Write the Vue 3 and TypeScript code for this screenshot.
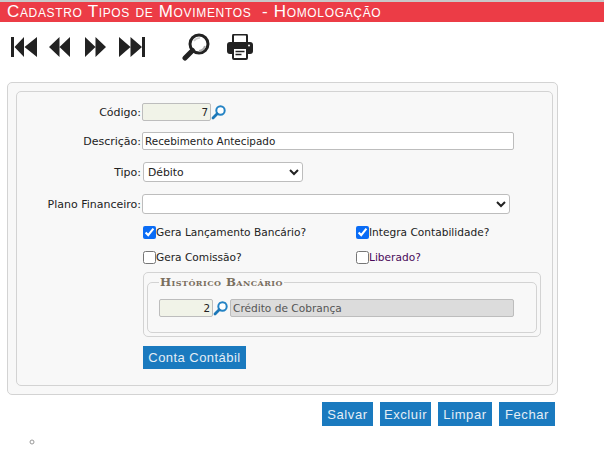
<script setup lang="ts">
const actions: string[] = ['Salvar', 'Excluir', 'Limpar', 'Fechar']
</script>

<template>
  <div class="page">
    <header class="title">Cadastro Tipos de Movimentos &nbsp;- Homologação</header>
    <nav class="toolbar">
      <svg class="nav" width="26" height="20" viewBox="0 0 26 20"><path d="M0 0h3v20H0zM13 0v20L3.500 10zM26 0v20L13.500 10z" fill="#222"/></svg>
      <svg class="nav second" width="21" height="20" viewBox="0 0 21 20"><path d="M10.500 0v20L0 10zM21 0v20L10.500 10z" fill="#222"/></svg>
      <svg class="nav third" width="21" height="20" viewBox="0 0 21 20"><path d="M0 0v20l10.500-10zM10.500 0v20L21 10z" fill="#222"/></svg>
      <svg class="nav fourth" width="26" height="20" viewBox="0 0 26 20"><path d="M0 0v20l11.500-10zM11.500 0v20L23 10zM23 0h3v20h-3z" fill="#222"/></svg>
      <svg class="magnifier" width="28" height="28" viewBox="0 0 28 28">
        <circle cx="17" cy="11" r="9" fill="#fff" stroke="#222" stroke-width="3"/>
        <path d="M12 8a7 7 0 0 1 6-3" stroke="#ccc" stroke-width="1.500" fill="none"/>
        <path d="M17 18a7 7 0 0 0 6-5" stroke="#aaa" stroke-width="2" fill="none"/>
        <path d="M10.500 17.500L3 25" stroke="#222" stroke-width="5" stroke-linecap="round"/>
      </svg>
      <svg class="printer" width="26" height="26" viewBox="0 0 26 26">
        <path d="M6 8V2a1.500 1.500 0 0 1 1.500-1.500h11A1.500 1.500 0 0 1 20 2v6" fill="#fff" stroke="#222" stroke-width="2"/>
        <rect y="8" width="26" height="12" rx="3" fill="#222"/>
        <circle cx="22" cy="11.500" r="1" fill="#fff"/>
        <rect x="6" y="14" width="14" height="11" rx="1" fill="#fff" stroke="#222" stroke-width="2"/>
        <path d="M8.500 17.500h9M8.500 20.500h6" stroke="#222" stroke-width="1.500"/>
      </svg>
    </nav>

    <section class="outer">
      <form class="inner" @submit.prevent>
        <div class="row code-row">
          <label class="label">Código:</label>
          <input class="field code" value="7" readonly />
          <svg class="lens" width="15" height="15" viewBox="0 0 15 15"><circle cx="9.500" cy="5.500" r="4.200" fill="#fff" stroke="#2483c4" stroke-width="2"/><path d="M6.200 8.800L2 13" stroke="#1d78b8" stroke-width="2.800" stroke-linecap="round"/></svg>
        </div>
        <div class="row desc-row">
          <label class="label">Descrição:</label>
          <input class="field desc" value="Recebimento Antecipado" />
        </div>
        <div class="row type-row">
          <label class="label">Tipo:</label>
          <select class="select type"><option>Débito</option></select>
        </div>
        <div class="row plan-row">
          <label class="label">Plano Financeiro:</label>
          <select class="select plan"><option></option></select>
        </div>
        <div class="checks">
          <label class="check"><input type="checkbox" checked />Gera Lançamento Bancário?</label>
          <label class="check"><input type="checkbox" checked />Integra Contabilidade?</label>
          <label class="check"><input type="checkbox" />Gera Comissão?</label>
          <label class="check liberado"><input type="checkbox" />Liberado?</label>
        </div>
        <div class="history">
          <fieldset class="history-set">
            <legend>Histórico Bancário</legend>
            <div class="history-row">
              <input class="field small-code" value="2" readonly />
              <svg class="lens" width="15" height="15" viewBox="0 0 15 15"><circle cx="9.500" cy="5.500" r="4.200" fill="#fff" stroke="#2483c4" stroke-width="2"/><path d="M6.200 8.800L2 13" stroke="#1d78b8" stroke-width="2.800" stroke-linecap="round"/></svg>
              <input class="field credit" value="Crédito de Cobrança" readonly />
            </div>
          </fieldset>
        </div>
        <button class="btn account" type="button">Conta Contábil</button>
      </form>
    </section>

    <div class="actions">
      <button v-for="a in actions" :key="a" class="btn" type="button">{{ a }}</button>
    </div>
    <ul class="empty"><li></li></ul>
  </div>
</template>

<style>
html, body { margin: 0; background: #fff; }
</style>

<style scoped>
.page {
  width: 604px;
  height: 453px;
  overflow: hidden;
  font-family: "DejaVu Sans", sans-serif;
  font-size: 11px;
  color: #222;
  border-top: 2px solid #c8c8c8;
  box-sizing: border-box;
}
.title {
  height: 20px;
  line-height: 20px;
  background: #ec3c46;
  color: #fff;
  font-family: "Liberation Sans", sans-serif;
  font-variant: small-caps;
  font-size: 17px;
  letter-spacing: 0.66px;
  padding-left: 7px;
}
.toolbar {
  display: flex;
  align-items: center;
  height: 50px;
  padding-left: 11px;
}
.nav.second { margin-left: 12px; }
.nav.third { margin-left: 15px; }
.nav.fourth { margin-left: 13px; }
.magnifier { margin-left: 37px; }
.printer { margin-left: 17px; }
.outer {
  margin: 10px 0 0 7px;
  width: 551px;
  height: 313px;
  box-sizing: border-box;
  border: 1px solid #d3d3d3;
  border-radius: 5px;
  background: #f8f8f8;
  padding: 8px 4px 8px 8px;
}
.inner {
  height: 295px;
  box-sizing: border-box;
  border: 1px solid #d3d3d3;
  border-radius: 5px;
  padding-top: 11px;
  padding-left: 124px;
}
.row { display: flex; align-items: center; position: relative; }
.code-row { height: 18px; }
.desc-row { height: 18px; margin-top: 11px; }
.type-row { height: 20px; margin-top: 12px; }
.plan-row { height: 20px; margin-top: 12px; }
.label {
  width: 124px;
  margin-left: -124px;
  margin-right: 1px;
  text-align: right;
  flex: none;
}
.field {
  box-sizing: border-box;
  height: 18px;
  border: 1px solid #bdbdbd;
  border-radius: 2px;
  font: 10.4px "DejaVu Sans", sans-serif;
  color: #222;
  padding: 0 2px;
  background: #fff;
  outline: none;
}
.code { width: 69px; text-align: right; background: #f1f3e8; }
.desc { width: 372px; }
.select {
  box-sizing: border-box;
  height: 20px;
  background: #fff;
  border: 1px solid #bdbdbd;
  border-radius: 3px;
  font: 10.800px "DejaVu Sans", sans-serif;
  color: #222;
}
.type { width: 160px; margin-left: 1px; }
.plan { width: 368px; }
.lens { flex: none; }
.checks {
  display: grid;
  grid-template-columns: 213px auto;
  grid-auto-rows: 13px;
  row-gap: 12px;
  margin-top: 12px;
  margin-left: 2px;
}
.check { display: flex; align-items: center; line-height: 13px; font-size: 10.6px; }
.check input {
  margin: 0;
  width: 13px;
  height: 13px;
  accent-color: #0a6cf5;
}
.liberado { color: #4a0a5a; }
.history {
  margin-top: 8px;
  margin-left: 2px;
  width: 398px;
  height: 65px;
  box-sizing: border-box;
  border: 1px solid #d3d3d3;
  border-radius: 5px;
  padding: 3px 3px;
}
.history-set {
  margin: 0;
  height: 57px;
  box-sizing: border-box;
  border: 1px solid #d3d3d3;
  border-radius: 5px;
  padding: 0 0 0 11px;
}
legend {
  font-family: "DejaVu Serif", serif;
  font-variant: small-caps;
  font-weight: bold;
  font-size: 11.800px;
  letter-spacing: 0.45px;
  color: #7a6f5f;
  padding: 0 1px;
  line-height: 13px;
}
.history-row { display: flex; align-items: center; margin-top: 10px; }
.small-code { width: 54px; text-align: right; background: #f1f3e8; }
.credit { width: 284px; margin-left: 2px; background: #dcdcdc; color: #555; font-size: 10.6px; }
.btn {
  height: 24px;
  border: 0;
  background: #1a7abf;
  color: #e4eef6;
  font: 13px "Liberation Sans", sans-serif;
  letter-spacing: 0.6px;
  padding: 0;
}
.account { display: block; width: 103px; height: 23px; margin: 9px 0 0 2px; letter-spacing: 0.45px; }
.actions {
  display: flex;
  gap: 7px;
  margin-top: 7px;
  margin-left: 322px;
}
.actions .btn:nth-child(-n+2) { width: 51px; }
.actions .btn:nth-child(3) { width: 54px; }
.actions .btn:nth-child(4) { width: 56px; }
.empty {
  margin: 8px 0 0;
  padding-left: 44px;
  list-style: circle;
  color: #999;
  font-size: 12px;
}
.empty li { height: 12px; }
</style>
